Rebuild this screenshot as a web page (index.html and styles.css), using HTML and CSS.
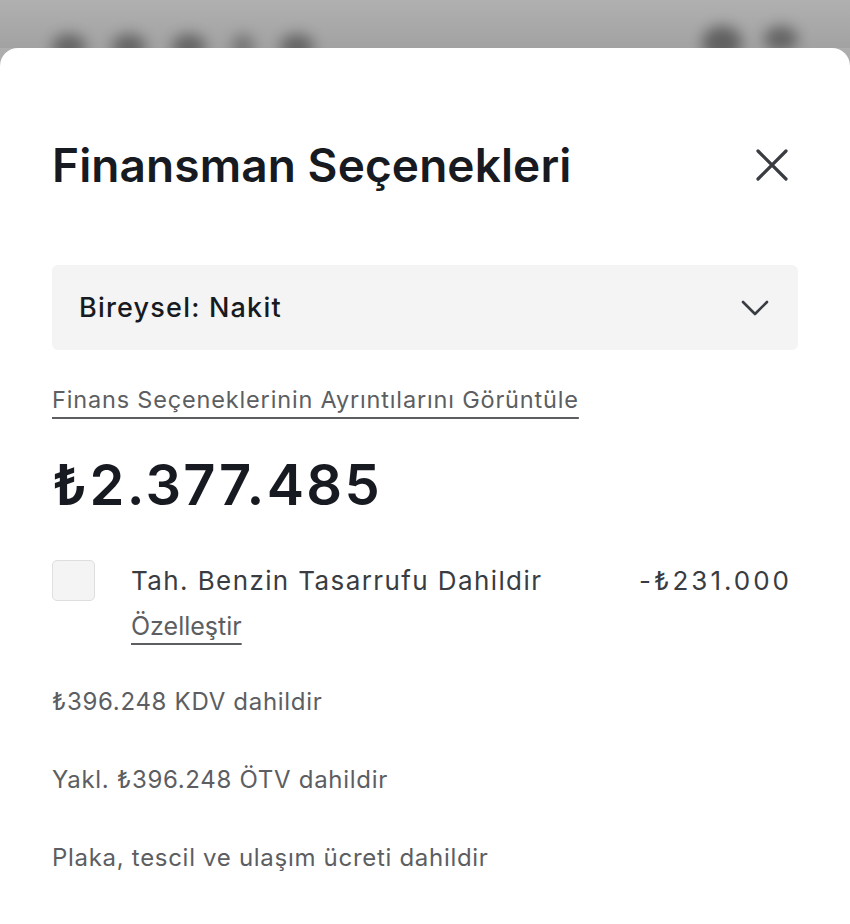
FILE: index.html
```html
<!DOCTYPE html>
<html lang="tr">
<head>
<meta charset="utf-8">
<title>Finansman Seçenekleri</title>
<link rel="stylesheet" href="styles.css">
</head>
<body>
<div class="backdrop">
  <div class="blobs-left">
    <span class="blob"></span><span class="blob"></span><span class="blob"></span><span class="blob small"></span><span class="blob"></span>
  </div>
  <div class="blobs-right">
    <span class="blob big"></span><span class="blob"></span>
  </div>
</div>
<main class="sheet">
  <header class="header">
    <h1 class="title">Finansman Seçenekleri</h1>
    <button class="close" aria-label="Kapat">
      <svg width="32" height="32" viewBox="0 0 32 32"><path d="M2 2 L30 30 M30 2 L2 30" stroke="#393c41" stroke-width="3.2" stroke-linecap="round" fill="none"/></svg>
    </button>
  </header>
  <div class="select">
    <span class="select-label">Bireysel: Nakit</span>
    <svg class="chevron" width="28" height="18" viewBox="0 0 28 18"><path d="M2 3 L14 15 L26 3" stroke="#393c41" stroke-width="2.6" stroke-linecap="round" stroke-linejoin="round" fill="none"/></svg>
  </div>
  <a class="details-link" href="#">Finans Seçeneklerinin Ayrıntılarını Görüntüle</a>
  <div class="price">₺2.377.485</div>
  <div class="option">
    <span class="checkbox"></span>
    <div class="option-body">
      <div class="option-line">
        <span>Tah. Benzin Tasarrufu Dahildir</span>
        <span class="option-amount">-₺231.000</span>
      </div>
      <a class="customize" href="#">Özelleştir</a>
    </div>
  </div>
  <ul class="notes">
    <li>₺396.248 KDV dahildir</li>
    <li>Yakl. ₺396.248 ÖTV dahildir</li>
    <li>Plaka, tescil ve ulaşım ücreti dahildir</li>
  </ul>
</main>
</body>
</html>
```
FILE: styles.css
```css
* { box-sizing: border-box; }
html, body { margin: 0; padding: 0; }
body {
  background: #adadad;
  font-family: Inter, "Noto Sans", "Liberation Sans", sans-serif;
  color: #393c41;
  overflow: hidden;
}
.backdrop {
  height: 48px;
  display: flex;
  justify-content: space-between;
  align-items: flex-end;
  padding: 0 52px 0 52px;
  background: linear-gradient(#b0b0b0, #a2a2a2);
  overflow: hidden;
}
.blobs-left, .blobs-right {
  display: flex;
  gap: 26px;
  transform: translateY(12px);
}
.blobs-right { gap: 22px; }
.blob {
  width: 34px;
  height: 26px;
  border-radius: 50%;
  background: #555;
  filter: blur(7px);
  opacity: 0.8;
}
.blob.small { width: 22px; opacity: 0.6; }
.blob.big { width: 40px; height: 34px; opacity: 0.85; }
.sheet {
  background: #fff;
  border-radius: 18px 18px 0 0;
  min-height: 876px;
  padding: 85px 52px 0 52px;
  display: flex;
  flex-direction: column;
}
.header {
  display: flex;
  justify-content: space-between;
  align-items: center;
  height: 64px;
}
.title {
  margin: 0;
  font-size: 46px;
  font-weight: 600;
  color: #171a20;
  letter-spacing: 0.1px;
  line-height: 64px;
}
.close {
  border: 0;
  background: none;
  padding: 0;
  margin-right: 10px;
  width: 32px;
  height: 32px;
  display: flex;
}
.select {
  margin-top: 68px;
  height: 85px;
  background: #f4f4f4;
  border-radius: 6px;
  display: flex;
  align-items: center;
  justify-content: space-between;
  padding: 0 29px 0 27px;
}
.select-label {
  font-size: 27px;
  font-weight: 500;
  letter-spacing: 1.2px;
  color: #171a20;
}
.details-link {
  margin-top: 34px;
  align-self: flex-start;
  font-size: 23.5px;
  letter-spacing: 0.83px;
  line-height: 32px;
  color: #5c5e62;
  text-decoration: underline;
  text-decoration-thickness: 2px;
  text-underline-offset: 9px;
}
.price {
  margin-top: 39px;
  font-size: 56px;
  font-weight: 600;
  letter-spacing: 2.3px;
  line-height: 60px;
  color: #171a20;
}
.option {
  margin-top: 45px;
  display: flex;
  gap: 36px;
}
.checkbox {
  flex: none;
  width: 43px;
  height: 41px;
  background: #f4f4f4;
  border: 1px solid #dedede;
  border-radius: 5px;
}
.option-body {
  flex: 1;
  display: flex;
  flex-direction: column;
  align-items: flex-start;
  padding-top: 5px;
}
.option-line {
  width: 100%;
  display: flex;
  justify-content: space-between;
  font-size: 26px;
  letter-spacing: 1.4px;
  line-height: 32px;
  color: #393c41;
  padding-right: 9px;
}
.option-amount { letter-spacing: 3px; margin-right: -3px; }
.customize {
  margin-top: 13px;
  font-size: 25px;
  line-height: 32px;
  color: #5c5e62;
  text-decoration: underline;
  text-decoration-thickness: 2px;
  text-underline-offset: 8px;
}
.notes {
  list-style: none;
  margin: 44px 0 0 0;
  padding: 0;
  display: flex;
  flex-direction: column;
  gap: 46px;
}
.notes li {
  font-size: 24px;
  letter-spacing: 0.7px;
  line-height: 32px;
  color: #5c5e62;
}
```
